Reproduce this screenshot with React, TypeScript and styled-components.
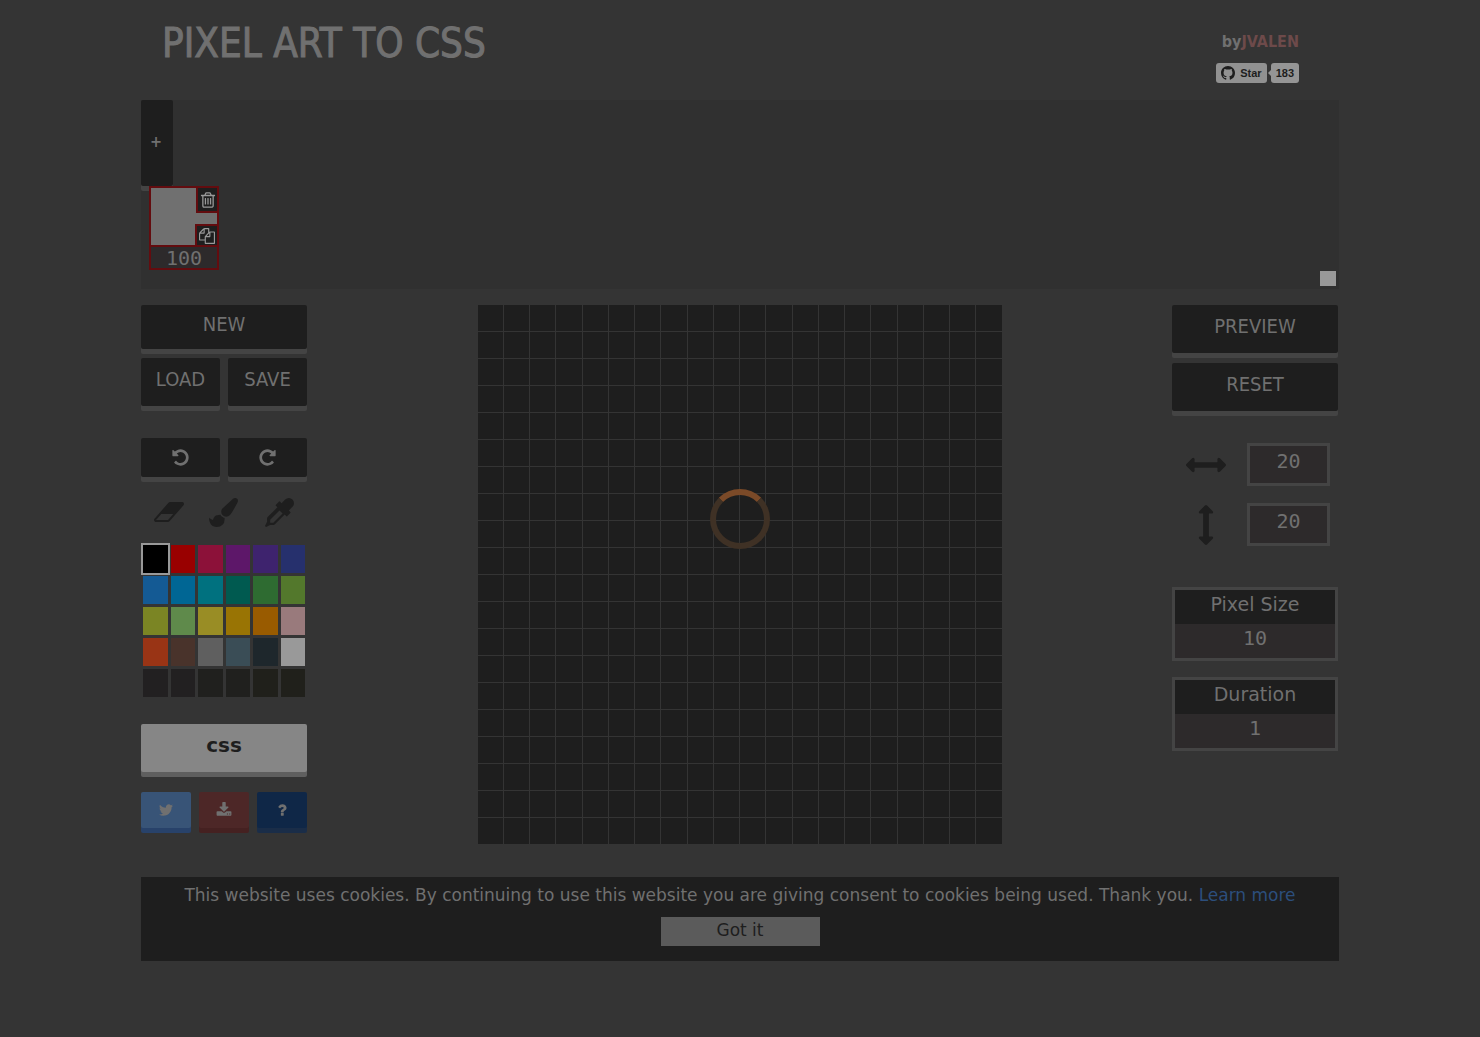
import React, { useState } from "react";
import styled, { createGlobalStyle } from "styled-components";

const color = {
  page: "#343434",
  panel: "#303030",
  dark: "#1e1e1e",
  edge: "#444444",
  text: "#707070",
  field: "#2d2a2b",
  red: "#630c0f",
};

const GlobalStyle = createGlobalStyle`
  *, *::before, *::after { box-sizing: border-box; }
  body {
    margin: 0;
    background: ${color.page};
    color: ${color.text};
    font-family: "DejaVu Sans Condensed", "DejaVu Sans", sans-serif;
    font-size: 20px;
    line-height: 24px;
  }
  button, input { font: inherit; color: inherit; border: 0; margin: 0; padding: 0; }
  button { cursor: pointer; }
  a { color: inherit; text-decoration: none; }
`;

const Page = styled.div`
  width: 100%;
  max-width: 1230px;
  margin: 0 auto;
  padding: 0 16px 76px;
`;

const Header = styled.header`
  display: flex;
  justify-content: space-between;
  align-items: flex-start;
  height: 100px;
  padding: 19px 40px 0 21px;
`;

const Title = styled.h1`
  margin: 0;
  font-size: 40px;
  line-height: 48px;
  font-weight: 400;
  -webkit-text-stroke: 1px currentColor;
`;

const Credits = styled.div`
  display: flex;
  flex-direction: column;
  align-items: flex-end;
  gap: 9px;
  padding-top: 11px;
  font-size: 16px;
  font-weight: 700;
`;

const Author = styled.a`
  color: #6d4a4a;
`;

const GithubButtons = styled.div`
  display: flex;
  gap: 4px;
  font: 700 11px/20px "Liberation Sans", sans-serif;
  color: #1e1e1e;
`;

const StarLink = styled.a`
  display: flex;
  align-items: center;
  gap: 5px;
  height: 20px;
  padding: 0 5px;
  border-radius: 3px;
  background: #919191;
`;

const CountLink = styled(StarLink)`
  position: relative;
  background: #959595;

  &::before {
    content: "";
    position: absolute;
    left: -3px;
    top: 7px;
    border: 3px solid transparent;
    border-left: 0;
    border-right-color: #959595;
  }
`;

const Frames = styled.section`
  display: flex;
  flex-direction: column;
  align-items: flex-start;
  position: relative;
  height: 189px;
  background: ${color.panel};
`;

const Button = styled.button<{ $height?: number; $bg?: string; $shadow?: string; $fg?: string; $lift?: number }>`
  display: flex;
  align-items: center;
  justify-content: center;
  width: 100%;
  height: ${(p) => p.$height ?? 48}px;
  padding-bottom: ${(p) => p.$lift ?? 6}px;
  border-radius: 2px;
  background: ${(p) => p.$bg ?? color.dark};
  color: ${(p) => p.$fg ?? color.text};
  box-shadow: 0 5px 0 ${(p) => p.$shadow ?? color.edge};
`;

const AddFrame = styled(Button)`
  width: 32px;
  padding-right: 2px;
  font-weight: 700;
  font-size: 16px;
`;

const CssLabel = styled.b`
  font-family: "DejaVu Sans", sans-serif;
`;

const Frame = styled.div`
  position: relative;
  width: 70px;
  margin-left: 8px;
  border: 2px solid ${color.red};
`;

const Thumb = styled.div`
  display: flex;
  flex-direction: column;
  align-items: flex-end;
  justify-content: space-between;
  height: 57px;
  background: ${color.text};
`;

const FrameAction = styled.button<{ $edge: "top" | "bottom" }>`
  display: flex;
  align-items: center;
  justify-content: center;
  width: ${(p) => (p.$edge === "top" ? 21 : 22)}px;
  height: ${(p) => (p.$edge === "top" ? 25 : 21)}px;
  background: ${color.dark};
  color: #999;
  border-left: 2px solid ${color.red};
  border-${(p) => (p.$edge === "top" ? "bottom" : "top")}: 2px solid ${color.red};
`;

const Input = styled.input`
  display: block;
  width: 100%;
  text-align: center;
  background: ${color.field};
  color: ${color.text};
  font-family: "DejaVu Sans Mono", monospace;
  outline: 0;
`;

const FrameInput = styled(Input)`
  height: 23px;
  border-top: 2px solid ${color.red};
`;

const Handle = styled.span`
  position: absolute;
  right: 3px;
  bottom: 3px;
  width: 16px;
  height: 15px;
  background: #999;
`;

const Main = styled.main`
  display: grid;
  grid-template-columns: 166px minmax(0, 524px) 166px;
  justify-content: space-between;
  align-items: start;
  gap: 16px;
  padding: 16px 1px 33px 0;
`;

const Column = styled.div`
  display: flex;
  flex-direction: column;
`;

const Row = styled.div<{ $cols: number; $top: number }>`
  display: grid;
  grid-template-columns: repeat(${(p) => p.$cols}, minmax(0, 1fr));
  gap: 8px;
  margin-top: ${(p) => p.$top}px;
`;

const Tools = styled.div`
  display: grid;
  grid-template-columns: repeat(3, 1fr);
  justify-items: center;
  margin-top: 20px;
`;

const Tool = styled.button`
  display: flex;
  align-items: center;
  justify-content: center;
  width: 40px;
  height: 30px;
  background: none;
  color: ${color.dark};
`;

const Palette = styled.div`
  display: grid;
  grid-template-columns: repeat(6, 1fr);
  gap: 3px;
  padding: 2px;
  margin-top: 16px;
`;

const Swatch = styled.button<{ $color: string; $active: boolean }>`
  height: 28px;
  background: ${(p) => p.$color};
  box-shadow: ${(p) => (p.$active ? "0 0 0 2px #999" : "none")};
`;

const Canvas = styled.div`
  display: grid;
  grid-template-columns: repeat(20, 1fr);
  grid-auto-rows: 26px;
  gap: 1px;
`;

const Cell = styled.div`
  background: ${color.dark};
`;

const Dimension = styled.label<{ $top: number }>`
  display: flex;
  align-items: center;
  justify-content: space-between;
  margin-top: ${(p) => p.$top}px;
  padding: 0 8px 0 14px;
  color: ${color.dark};
`;

const DimensionInput = styled(Input)`
  width: 83px;
  height: 43px;
  padding-bottom: 7px;
  border: 3px solid ${color.edge};
`;

const Setting = styled.label<{ $top: number }>`
  display: block;
  margin-top: ${(p) => p.$top}px;
  border: 3px solid ${color.edge};
  background: ${color.dark};
  text-align: center;
`;

const SettingName = styled.span`
  display: block;
  padding: 2px 0 8px;
  font-family: "DejaVu Sans", sans-serif;
  font-size: 19px;
`;

const SettingInput = styled(Input)`
  height: 34px;
  padding-bottom: 6px;
`;

const Cookies = styled.aside`
  display: flex;
  flex-direction: column;
  align-items: center;
  gap: 10px;
  padding: 6px 16px 15px;
  background: ${color.dark};
  font-family: "DejaVu Sans", sans-serif;
  font-size: 17px;
  text-align: center;
`;

const CookieText = styled.p`
  margin: 0;
`;

const LearnMore = styled.a`
  color: #2c4e7c;
`;

const Accept = styled.button`
  width: 159px;
  height: 29px;
  padding-bottom: 4px;
  background: #5b5b5b;
  color: ${color.dark};
`;

const Overlay = styled.div`
  position: fixed;
  inset: 0;
  display: flex;
  align-items: center;
  justify-content: center;
  pointer-events: none;
`;

const Spinner = styled.div`
  width: 60px;
  height: 60px;
  border: 6px solid #3f3125;
  border-top-color: #7b4a28;
  border-radius: 50%;
`;

const paths = {
  github:
    "M8 0C3.58 0 0 3.58 0 8c0 3.54 2.29 6.53 5.47 7.59.4.07.55-.17.55-.38 0-.19-.01-.82-.01-1.49-2.01.37-2.53-.49-2.69-.94-.09-.23-.48-.94-.82-1.13-.28-.15-.68-.52-.01-.53.63-.01 1.08.58 1.23.82.72 1.21 1.87.87 2.33.66.07-.52.28-.87.51-1.07-1.78-.2-3.64-.89-3.64-3.95 0-.87.31-1.59.82-2.15-.08-.2-.36-1.02.08-2.12 0 0 .67-.21 2.2.82.64-.18 1.32-.27 2-.27.68 0 1.36.09 2 .27 1.53-1.04 2.2-.82 2.2-.82.44 1.1.16 1.92.08 2.12.51.56.82 1.27.82 2.15 0 3.07-1.87 3.75-3.65 3.95.29.25.54.73.54 1.48 0 1.07-.01 1.93-.01 2.2 0 .21.15.46.55.38A8.013 8.013 0 0016 8c0-4.42-3.58-8-8-8z",
  eraser:
    "M960 1408l336-384h-768l-336 384h768zm1013-1077q15 34 9.5 71.5t-30.5 65.5l-896 1024q-38 44-96 44h-768q-38 0-69.5-20.5t-47.5-54.5q-15-34-9.5-71.5t30.5-65.5l896-1024q38-44 96-44h768q38 0 69.5 20.5t47.5 54.5z",
  brush:
    "M1615 0q70 0 122.5 46.5t52.5 116.5q0 63-45 151-332 629-465 752-97 91-218 91-126 0-216.5-92.5t-90.5-219.5q0-128 92-212l638-579q59-54 130-54zm-909 1034q39 76 106.5 130t150.5 76l1 71q4 213-129.5 347t-348.5 134q-123 0-218-46.5t-152.5-127.5-86.5-183-29-220q7 5 41 30t62 44.5 59 36.5 46 17q41 0 55-37 25-66 57.5-112.5t69.5-76 88-47.5 103-25.5 125-10.5z",
  dropper:
    "M1698 94q94 94 94 226.5t-94 225.5l-225 223 104 104q10 10 10 23t-10 23l-210 210q-10 10-23 10t-23-10l-105-105-603 603q-37 37-90 37h-203l-256 128-64-64 128-256v-203q0-53 37-90l603-603-105-105q-10-10-10-23t10-23l210-210q10-10 23-10t23 10l104 104 223-225q93-94 225.5-94t226.5 94zm-1186 1442l576-576-192-192-576 576v192h192z",
  trash:
    "M704 736v576q0 14-9 23t-23 9h-64q-14 0-23-9t-9-23v-576q0-14 9-23t23-9h64q14 0 23 9t9 23zm256 0v576q0 14-9 23t-23 9h-64q-14 0-23-9t-9-23v-576q0-14 9-23t23-9h64q14 0 23 9t9 23zm256 0v576q0 14-9 23t-23 9h-64q-14 0-23-9t-9-23v-576q0-14 9-23t23-9h64q14 0 23 9t9 23zm128 724v-948h-896v948q0 22 7 40.5t14.5 27 10.5 8.5h832q3 0 10.5-8.5t14.5-27 7-40.5zm-672-1076h448l-48-117q-7-9-17-11h-317q-10 2-17 11zm928 32v64q0 14-9 23t-23 9h-96v948q0 83-47 143.5t-113 60.5h-832q-66 0-113-58.5t-47-141.5v-952h-96q-14 0-23-9t-9-23v-64q0-14 9-23t23-9h309l70-167q15-37 54-63t79-26h320q40 0 79 26t54 63l70 167h309q14 0 23 9t9 23z",
  copy: "M1696 384q40 0 68 28t28 68v1216q0 40-28 68t-68 28h-960q-40 0-68-28t-28-68v-288h-544q-40 0-68-28t-28-68v-672q0-40 20-88t48-76l408-408q28-28 76-48t88-20h416q40 0 68 28t28 68v328q68-40 128-40h416zm-544 213l-299 299h299v-299zm-640-384l-299 299h299v-299zm196 647l316-316v-416h-384v416q0 40-28 68t-68 28h-416v640h512v-256q0-40 20-88t48-76zm956 804v-1152h-384v416q0 40-28 68t-68 28h-416v640h896z",
  undo: "M1664 896q0 156-61 298t-164 245-245 164-298 61q-172 0-327-72.5t-264-204.5q-7-10-6.5-22.5t8.5-20.5l137-138q10-9 25-9 16 2 23 12 73 95 179 147t225 52q104 0 198.5-40.5t163.5-109.5 109.5-163.5 40.5-198.5-40.5-198.5-109.5-163.5-163.5-109.5-198.5-40.5q-98 0-188 35.5t-160 101.5l137 138q31 30 14 69-17 40-59 40h-448q-26 0-45-19t-19-45v-448q0-42 40-59 39-17 69 14l130 129q107-101 244.5-156.5t284.5-55.5q156 0 298 61t245 164 164 245 61 298z",
  arrows:
    "M1792 896q0 26-19 45l-256 256q-19 19-45 19t-45-19-19-45v-128h-1024v128q0 26-19 45t-45 19-45-19l-256-256q-19-19-19-45t19-45l256-256q19-19 45-19t45 19 19 45v128h1024v-128q0-26 19-45t45-19 45 19l256 256q19 19 19 45z",
  twitter:
    "M1684 408q-67 98-162 167 1 14 1 42 0 130-38 259.5t-115.5 248.5-184.5 210.5-258 146-323 54.5q-271 0-496-145 35 4 78 4 225 0 401-138-105-2-188-64.5t-114-159.5q33 5 61 5 43 0 85-11-112-23-185.5-111.5t-73.5-205.5v-4q68 38 146 41-66-44-105-115t-39-154q0-88 44-163 121 149 294.5 238.5t371.5 99.5q-8-38-8-74 0-134 94.5-228.5t228.5-94.5q140 0 236 102 109-21 205-78-37 115-142 178 93-10 186-50z",
  download:
    "M1344 1344q0-26-19-45t-45-19-45 19-19 45 19 45 45 19 45-19 19-45zm256 0q0-26-19-45t-45-19-45 19-19 45 19 45 45 19 45-19 19-45zm128-224v320q0 40-28 68t-68 28h-1472q-40 0-68-28t-28-68v-320q0-40 28-68t68-28h465l135 136q58 56 136 56t136-56l136-136h464q40 0 68 28t28 68zm-325-569q17 41-14 70l-448 448q-18 19-45 19t-45-19l-448-448q-31-29-14-70 17-39 59-39h256v-448q0-26 19-45t45-19h256q26 0 45 19t19 45v448h256q42 0 59 39z",
  question:
    "M1088 1256v240q0 16-12 28t-28 12h-240q-16 0-28-12t-12-28v-240q0-16 12-28t28-12h240q16 0 28 12t12 28zm316-600q0 54-15.5 101t-35 76.5-55 59.5-57.5 43.5-61 35.5q-41 23-68.5 65t-27.5 67q0 17-12 32.5t-28 15.5h-240q-15 0-25.5-18.5t-10.5-37.5v-45q0-83 65-156.5t143-108.5q59-27 84-56t25-76q0-42-46.5-74t-107.5-32q-65 0-108 29-35 25-107 115-13 16-31 16-12 0-25-8l-164-125q-13-10-15.5-25t5.5-28q160-266 464-266 80 0 161 31t146 83 106 127.5 41 158.5z",
};

const Icon = ({
  name,
  size,
  box = "0 0 1792 1792",
  turn,
}: {
  name: keyof typeof paths;
  size: number;
  box?: string;
  turn?: string;
}) => (
  <svg height={size} viewBox={box} fill="currentColor" aria-hidden="true">
    <path d={paths[name]} transform={turn} />
  </svg>
);

const swatches = [
  "#000000", "#990000", "#8c1139", "#5d1769", "#3e236e", "#26306d",
  "#145a94", "#006694", "#00717f", "#005a50", "#2e6b31", "#53782c",
  "#7b8524", "#5f8a4b", "#998d25", "#997404", "#995b00", "#997a7c",
  "#993415", "#49332b", "#5f5f5f", "#3a4d56", "#1e272c", "#999999",
  "#222021", "#222021", "#20201e", "#20201e", "#20201b", "#20201b",
];

const cells = Array.from({ length: 400 }, (_, i) => i);

export default function App() {
  const [active, setActive] = useState(0);

  return (
    <>
      <GlobalStyle />
      <Page>
        <Header>
          <Title>PIXEL ART TO CSS</Title>
          <Credits>
            <div>
              by<Author href="#author">JVALEN</Author>
            </div>
            <GithubButtons>
              <StarLink href="#star">
                <Icon name="github" size={14} box="0 0 16 16" />
                Star
              </StarLink>
              <CountLink href="#stargazers">183</CountLink>
            </GithubButtons>
          </Credits>
        </Header>

        <Frames>
          <AddFrame $height={86} $lift={2} aria-label="Add frame">
            +
          </AddFrame>
          <Frame>
            <Thumb>
              <FrameAction $edge="top" aria-label="Delete frame">
                <Icon name="trash" size={18} />
              </FrameAction>
              <FrameAction $edge="bottom" aria-label="Duplicate frame">
                <Icon name="copy" size={16} />
              </FrameAction>
            </Thumb>
            <FrameInput aria-label="Frame interval" defaultValue="100" />
          </Frame>
          <Handle />
        </Frames>

        <Main>
          <Column>
            <Button $height={44}>NEW</Button>
            <Row $cols={2} $top={9}>
              <Button>LOAD</Button>
              <Button>SAVE</Button>
            </Row>
            <Row $cols={2} $top={32}>
              <Button $height={39} $lift={0} aria-label="Undo">
                <Icon name="undo" size={19} />
              </Button>
              <Button $height={39} $lift={0} aria-label="Redo">
                <Icon name="undo" size={19} turn="matrix(-1 0 0 1 1792 0)" />
              </Button>
            </Row>
            <Tools>
              <Tool aria-label="Eraser">
                <Icon name="eraser" size={28} box="0 0 2048 1792" />
              </Tool>
              <Tool aria-label="Brush">
                <Icon name="brush" size={29} />
              </Tool>
              <Tool aria-label="Color picker">
                <Icon name="dropper" size={29} />
              </Tool>
            </Tools>
            <Palette>
              {swatches.map((value, i) => (
                <Swatch
                  key={i}
                  $color={value}
                  $active={i === active}
                  aria-label={`Color ${i + 1}`}
                  onClick={() => setActive(i)}
                />
              ))}
            </Palette>
            <Row $cols={1} $top={25}>
              <Button $bg="#868686" $shadow="#5f5f5f" $fg={color.dark}>
                <CssLabel>css</CssLabel>
              </Button>
            </Row>
            <Row $cols={3} $top={20}>
              <Button $height={36} $lift={0} $bg="#385477" $shadow="#28426a" aria-label="Share on Twitter">
                <Icon name="twitter" size={16} />
              </Button>
              <Button $height={36} $lift={0} $bg="#4d2727" $shadow="#452121" aria-label="Download">
                <Icon name="download" size={16} />
              </Button>
              <Button $height={36} $lift={0} $bg="#0f2747" $shadow="#1a2d48" aria-label="Help">
                <Icon name="question" size={16} />
              </Button>
            </Row>
          </Column>

          <Canvas>
            {cells.map((i) => (
              <Cell key={i} />
            ))}
          </Canvas>

          <Column>
            <Button>PREVIEW</Button>
            <Row $cols={1} $top={10}>
              <Button>RESET</Button>
            </Row>
            <Dimension $top={32}>
              <Icon name="arrows" size={40} />
              <DimensionInput aria-label="Columns" defaultValue="20" />
            </Dimension>
            <Dimension $top={17}>
              <Icon name="arrows" size={40} turn="rotate(90 896 896)" />
              <DimensionInput aria-label="Rows" defaultValue="20" />
            </Dimension>
            <Setting $top={41}>
              <SettingName>Pixel Size</SettingName>
              <SettingInput defaultValue="10" />
            </Setting>
            <Setting $top={16}>
              <SettingName>Duration</SettingName>
              <SettingInput defaultValue="1" />
            </Setting>
          </Column>
        </Main>

        <Cookies>
          <CookieText>
            This website uses cookies. By continuing to use this website you are giving consent to cookies being
            used. Thank you. <LearnMore href="#cookies">Learn more</LearnMore>
          </CookieText>
          <Accept>Got it</Accept>
        </Cookies>
      </Page>
      <Overlay role="status" aria-label="Loading">
        <Spinner />
      </Overlay>
    </>
  );
}
